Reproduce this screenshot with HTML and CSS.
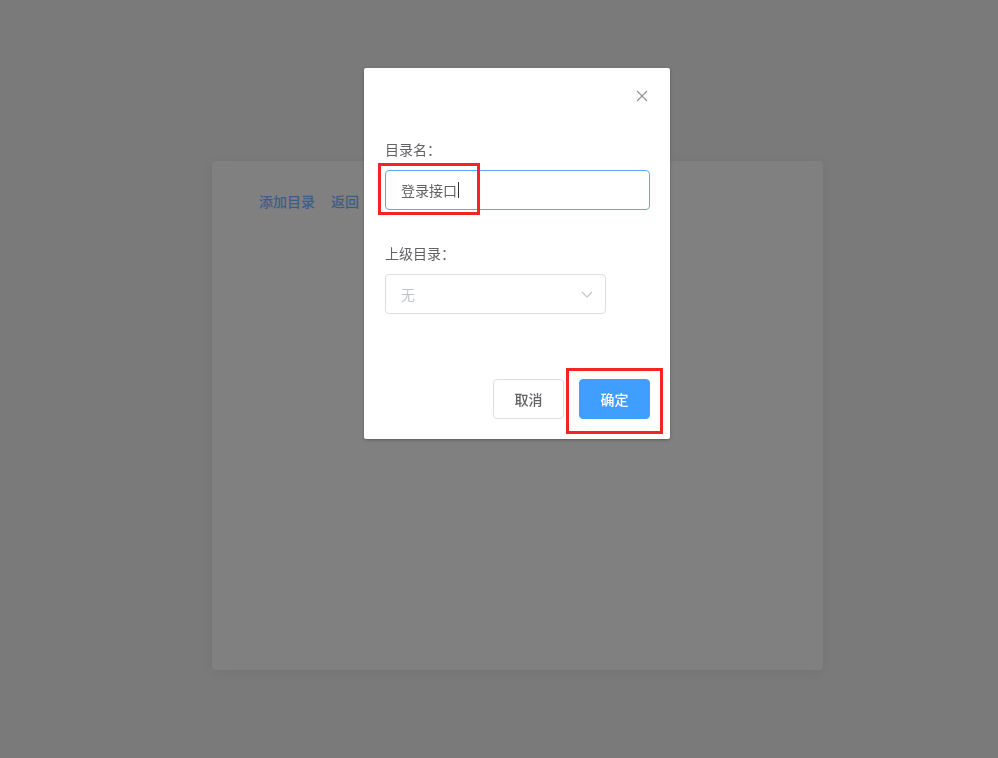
FILE: index.html
```html
<!DOCTYPE html>
<html lang="zh-CN">
<head>
<meta charset="utf-8">
<link rel="stylesheet" href="styles.css">
</head>
<body>
<div class="page">
  <div class="card">
    <div class="links">
      <a class="link">添加目录</a>
      <a class="link">返回</a>
    </div>
  </div>
</div>
<div class="mask">
  <div class="dialog">
    <div class="dlg-head">
      <svg class="close" width="16" height="16" viewBox="0 0 16 16"><path d="M3 3L13 13M13 3L3 13" stroke="#909399" stroke-width="1.2" fill="none"/></svg>
    </div>
    <div class="dlg-body">
      <div class="label">目录名：</div>
      <div class="input focus"><span class="val">登录接口</span><span class="caret"></span></div>
      <div class="label second">上级目录：</div>
      <div class="select">
        <span class="ph">无</span>
        <svg width="14" height="14" viewBox="0 0 14 14"><path d="M2 5L7 10L12 5" stroke="#c0c4cc" stroke-width="1.2" fill="none"/></svg>
      </div>
    </div>
    <div class="dlg-foot">
      <button class="btn">取消</button>
      <button class="btn primary">确定</button>
    </div>
    <div class="mark mark1"></div>
    <div class="mark mark2"></div>
  </div>
</div>
</body>
</html>
```
FILE: styles.css
```css
html, body {
  margin: 0;
  padding: 0;
  height: 100%;
}
body {
  background: #7a7a7a;
  font-family: "Microsoft YaHei", "Noto Sans CJK SC", "Noto Sans", sans-serif;
  font-size: 14px;
  overflow: hidden;
}
.page {
  padding: 161px 0 0 212px;
}
.card {
  width: 611px;
  height: 509px;
  background: #808080;
  border-radius: 4px;
  box-shadow: 0 2px 12px rgba(0,0,0,0.06);
  box-sizing: border-box;
  padding: 30px 0 0 47px;
}
.links {
  display: flex;
  gap: 16px;
}
.link {
  color: #3c5d86;
  font-size: 14px;
  line-height: 20px;
  font-weight: 500;
}
.mask {
  position: fixed;
  inset: 0;
}
.dialog {
  position: relative;
  margin: 68px 0 0 364px;
  width: 306px;
  height: 371px;
  background: #fff;
  border-radius: 2px;
  box-shadow: 0 1px 3px rgba(0,0,0,0.3);
  box-sizing: border-box;
  display: flex;
  flex-direction: column;
}
.dlg-head {
  display: flex;
  justify-content: flex-end;
  padding: 20px 20px 0 20px;
  height: 16px;
}
.close { display: block; }
.dlg-body {
  padding: 35px 20px 0 21px;
  flex: 1;
}
.label {
  color: #606266;
  line-height: 20px;
  height: 20px;
  margin-bottom: 11px;
}
.label.second {
  margin-top: 33px;
  margin-bottom: 11px;
}
.input {
  height: 40px;
  box-sizing: border-box;
  border: 1px solid #5aa9ff;
  border-radius: 4px;
  padding: 0 15px;
  display: flex;
  align-items: center;
  color: #606266;
}
.caret {
  display: inline-block;
  width: 1px;
  height: 16px;
  background: #303133;
  margin-left: 1px;
}
.select {
  width: 221px;
  height: 40px;
  box-sizing: border-box;
  border: 1px solid #dcdfe6;
  border-radius: 4px;
  padding: 0 11px 0 15px;
  display: flex;
  align-items: center;
  justify-content: space-between;
}
.ph { color: #c0c4cc; }
.select svg { display: block; }
.dlg-foot {
  display: flex;
  justify-content: flex-end;
  gap: 15px;
  padding: 0 20px 20px 20px;
}
.btn {
  width: 71px;
  height: 40px;
  border: 1px solid #dcdfe6;
  border-radius: 4px;
  background: #fff;
  color: #606266;
  font-family: inherit;
  font-size: 14px;
  font-weight: 500;
  padding: 0;
}
.btn.primary {
  background: #409eff;
  border-color: #409eff;
  color: #fff;
}
.mark {
  position: absolute;
  border: 3px solid #f42424;
  box-sizing: border-box;
}
.mark1 {
  left: 14px;
  top: 95px;
  width: 102px;
  height: 52px;
}
.mark2 {
  left: 202px;
  top: 300px;
  width: 97px;
  height: 66px;
}
```
